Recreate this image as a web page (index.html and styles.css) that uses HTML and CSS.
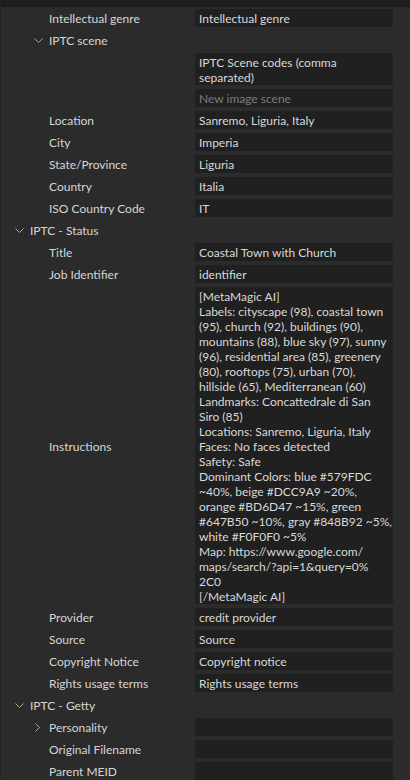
FILE: index.html
```html
<!DOCTYPE html>
<html lang="en">
<head>
<meta charset="utf-8">
<title>Metadata</title>
<link rel="stylesheet" href="styles.css">
</head>
<body>
<div class="topbar"></div>
<div class="panel">
  <div class="row"><div class="label lvl2">Intellectual genre</div><div class="field">Intellectual genre</div></div>
  <div class="row"><div class="label lvl2 group"><span class="chev"><svg width="9" height="5" viewBox="0 0 9 5"><polyline points="0.5,0.5 4.5,4.5 8.5,0.5"/></svg></span>IPTC scene</div></div>
  <div class="row"><div class="label"></div><div class="field multi">IPTC Scene codes (comma<br>separated)</div></div>
  <div class="row"><div class="label"></div><div class="field placeholder">New image scene</div></div>
  <div class="row"><div class="label lvl2">Location</div><div class="field">Sanremo, Liguria, Italy</div></div>
  <div class="row"><div class="label lvl2">City</div><div class="field">Imperia</div></div>
  <div class="row"><div class="label lvl2">State/Province</div><div class="field">Liguria</div></div>
  <div class="row"><div class="label lvl2">Country</div><div class="field">Italia</div></div>
  <div class="row"><div class="label lvl2">ISO Country Code</div><div class="field">IT</div></div>
  <div class="row"><div class="label lvl1"><span class="chev"><svg width="9" height="5" viewBox="0 0 9 5"><polyline points="0.5,0.5 4.5,4.5 8.5,0.5"/></svg></span>IPTC - Status</div></div>
  <div class="row"><div class="label lvl2">Title</div><div class="field">Coastal Town with Church</div></div>
  <div class="row"><div class="label lvl2">Job Identifier</div><div class="field">identifier</div></div>
  <div class="row"><div class="label lvl2">Instructions</div><div class="field multi">
    <span class="ln">[MetaMagic AI]</span>
    <span class="ln">Labels: cityscape (98), coastal town</span>
    <span class="ln">(95), church (92), buildings (90),</span>
    <span class="ln">mountains (88), blue sky (97), sunny</span>
    <span class="ln">(96), residential area (85), greenery</span>
    <span class="ln">(80), rooftops (75), urban (70),</span>
    <span class="ln">hillside (65), Mediterranean (60)</span>
    <span class="ln">Landmarks: Concattedrale di San</span>
    <span class="ln">Siro (85)</span>
    <span class="ln">Locations: Sanremo, Liguria, Italy</span>
    <span class="ln">Faces: No faces detected</span>
    <span class="ln">Safety: Safe</span>
    <span class="ln">Dominant Colors: blue #579FDC</span>
    <span class="ln">~40%, beige #DCC9A9 ~20%,</span>
    <span class="ln">orange #BD6D47 ~15%, green</span>
    <span class="ln">#647B50 ~10%, gray #848B92 ~5%,</span>
    <span class="ln">white #F0F0F0 ~5%</span>
    <span class="ln">Map: https://www.google.com/</span>
    <span class="ln">maps/search/?api=1&amp;query=0%</span>
    <span class="ln">2C0</span>
    <span class="ln">[/MetaMagic AI]</span>
  </div></div>
  <div class="row"><div class="label lvl2">Provider</div><div class="field">credit provider</div></div>
  <div class="row"><div class="label lvl2">Source</div><div class="field">Source</div></div>
  <div class="row"><div class="label lvl2">Copyright Notice</div><div class="field">Copyright notice</div></div>
  <div class="row"><div class="label lvl2">Rights usage terms</div><div class="field">Rights usage terms</div></div>
  <div class="row"><div class="label lvl1"><span class="chev"><svg width="9" height="5" viewBox="0 0 9 5"><polyline points="0.5,0.5 4.5,4.5 8.5,0.5"/></svg></span>IPTC - Getty</div></div>
  <div class="row"><div class="label lvl2 group"><span class="chev right"><svg width="5" height="9" viewBox="0 0 5 9"><polyline points="0.5,0.5 4.5,4.5 0.5,8.5"/></svg></span>Personality</div><div class="field"></div></div>
  <div class="row"><div class="label lvl2">Original Filename</div><div class="field"></div></div>
  <div class="row"><div class="label lvl2">Parent MEID</div><div class="field"></div></div>
</div>
</body>
</html>
```
FILE: styles.css
```css
html, body {
  margin: 0;
  padding: 0;
  background: #2b2b2b;
}
body {
  width: 410px;
  height: 780px;
  overflow: hidden;
  font-family: "Lato", "Open Sans", sans-serif;
  font-size: 12px;
  color: #d6d6d6;
  border-left: 1px solid #232323;
  box-sizing: border-box;
}
.topbar {
  height: 7px;
  background: #1d1d1d;
}
.panel {
  display: flex;
  flex-direction: column;
  gap: 4px;
  padding-top: 2px;
}
.row {
  display: flex;
  align-items: center;
  min-height: 18px;
}
.label {
  width: 194px;
  height: 18px;
  box-sizing: border-box;
  padding-top: 2px;
  flex: none;
  display: flex;
  align-items: center;
  line-height: 16px;
  white-space: nowrap;
}
.lvl1 { padding-left: 14px; }
.lvl2 { padding-left: 48px; }
.lvl2.group { padding-left: 33px; }
.chev {
  width: 15px;
  height: 9px;
  flex: none;
  display: flex;
  align-items: center;
  margin-top: -2px;
}
.chev.right { padding-left: 1px; box-sizing: border-box; }
.chev svg {
  display: block;
  fill: none;
  stroke: #a8a8a8;
  stroke-width: 1;
}
.field {
  width: 198px;
  flex: none;
  box-sizing: border-box;
  min-height: 18px;
  padding: 2px 4px 0;
  line-height: 16px;
  background: #202020;
  color: #d8d8d8;
  white-space: nowrap;
  overflow: hidden;
}
.field.multi {
  line-height: 15px;
}
.field.placeholder {
  color: #7c7c7c;
}
.ln {
  display: block;
}
```
